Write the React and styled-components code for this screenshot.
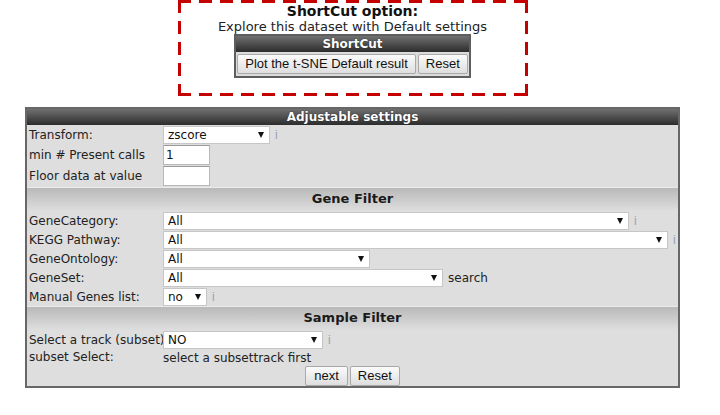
import React from 'react';
import styled, { createGlobalStyle } from 'styled-components';

const Global = createGlobalStyle`
  html, body { margin: 0; padding: 0; background: #fff; }
  body { font-family: "DejaVu Sans", Verdana, sans-serif; color: #222; }
  * { box-sizing: border-box; }
`;

const Page = styled.div`
  width: 705px;
  display: flex;
  flex-direction: column;
  align-items: center;
`;

const dash = (dir) =>
  `repeating-linear-gradient(${dir}, #c40000 0 13px, transparent 13px 21px)`;

const ShortcutBox = styled.section`
  width: 350px;
  padding: 3px 3px 18px;
  background:
    ${dash('90deg')} left top / 100% 3px no-repeat,
    ${dash('90deg')} left bottom / 100% 3px no-repeat,
    ${dash('180deg')} left top / 3px 100% no-repeat,
    ${dash('180deg')} right top / 3px 100% no-repeat;
  display: flex;
  flex-direction: column;
  align-items: center;
`;

const BoxTitle = styled.div`
  font-weight: bold;
  font-size: 14px;
  line-height: 16px;
  color: #111;
`;

const BoxText = styled.div`
  font-size: 13px;
  line-height: 15px;
  color: #222;
`;

const MiniTable = styled.div`
  border: 2px solid #5e5e5e;
  background: #dcdcdc;
`;

const DarkHeader = styled.div`
  height: 16px;
  line-height: 16px;
  text-align: center;
  color: #fff;
  font-weight: bold;
  font-size: 12px;
  background: linear-gradient(#707070, #2c2c2c);
  text-shadow: 0 0 1px #000;
`;

const ButtonRow = styled.div`
  display: flex;
  justify-content: center;
  gap: 2px;
  padding: ${(p) => p.$pad || '0'};
`;

const Btn = styled.button`
  font-family: "Liberation Sans", Arial, sans-serif;
  font-size: 13px;
  color: #111;
  height: 20px;
  padding: 0 ${(p) => p.$px || 7}px;
  border: 1px solid #a9a9a9;
  border-radius: 2px;
  background: linear-gradient(#fbfbfb, #dedede);
  line-height: 18px;
`;

const Settings = styled.div`
  margin-top: 11px;
  width: 655px;
  border: 2px solid #676767;
  background: #dedede;
`;

const SectionHeader = styled.div`
  height: 24px;
  line-height: 21px;
  text-align: center;
  font-weight: bold;
  font-size: 13px;
  color: #1a1a1a;
  border-top: 1px solid #ebebeb;
  background: linear-gradient(#b9b9b9, #dedede);
`;

const Row = styled.div`
  display: grid;
  grid-template-columns: 136px 1fr;
  align-items: center;
  padding: ${(p) => p.$pad || '1px 0 0'};
`;

const Label = styled.div`
  padding-left: 2px;
  font-size: 12px;
  white-space: nowrap;
  color: #222;
`;

const Control = styled.div`
  display: flex;
  align-items: center;
  gap: 5px;
  font-size: 12px;
  line-height: 16px;
  color: #222;
`;

const SelectBox = styled.div`
  width: ${(p) => p.$w}px;
  height: 18px;
  background: #fff;
  border: 1px solid #c6c6c6;
  display: flex;
  align-items: center;
  justify-content: space-between;
  padding: 0 5px 0 4px;
  font-size: 12px;
  color: #111;
`;

const Arrow = styled.span`
  width: 0;
  height: 0;
  border-left: 3.5px solid transparent;
  border-right: 3.5px solid transparent;
  border-top: 6px solid #111;
`;

const Info = styled.span`
  font-family: "Liberation Sans", Arial, sans-serif;
  font-size: 12px;
  color: #98a1af;
`;

const TextInput = styled.input`
  width: 47px;
  height: 20px;
  border: 1px solid #b8b8b8;
  border-top-color: #9a9a9a;
  background: #fff;
  padding: 0 2px;
  font-family: "DejaVu Sans", Verdana, sans-serif;
  font-size: 12px;
  color: #111;
`;

const TextRow = styled(Row)`
  height: 17px;
  padding: 0;
  line-height: 17px;
`;

function Select({ width, value, info }) {
  return (
    <Control>
      <SelectBox $w={width}>
        <span>{value}</span>
        <Arrow />
      </SelectBox>
      {info && <Info>i</Info>}
    </Control>
  );
}

export default function App() {
  return (
    <>
      <Global />
      <Page>
        <ShortcutBox>
          <BoxTitle>ShortCut option:</BoxTitle>
          <BoxText>Explore this dataset with Default settings</BoxText>
          <MiniTable>
            <DarkHeader>ShortCut</DarkHeader>
            <ButtonRow $pad="2px 1px">
              <Btn>Plot the t-SNE Default result</Btn>
              <Btn>Reset</Btn>
            </ButtonRow>
          </MiniTable>
        </ShortcutBox>

        <Settings>
          <DarkHeader>Adjustable settings</DarkHeader>
          <Row $pad="1px 0">
            <Label>Transform:</Label>
            <Select width={107} value="zscore" info />
          </Row>
          <Row $pad="0 0 1px">
            <Label>min # Present calls</Label>
            <Control>
              <TextInput defaultValue="1" />
            </Control>
          </Row>
          <Row $pad="0 0 1px">
            <Label>Floor data at value</Label>
            <Control>
              <TextInput defaultValue="" />
            </Control>
          </Row>

          <SectionHeader>Gene Filter</SectionHeader>
          <Row>
            <Label>GeneCategory:</Label>
            <Select width={466} value="All" info />
          </Row>
          <Row>
            <Label>KEGG Pathway:</Label>
            <Select width={505} value="All" info />
          </Row>
          <Row>
            <Label>GeneOntology:</Label>
            <Select width={207} value="All" />
          </Row>
          <Row>
            <Label>GeneSet:</Label>
            <Control>
              <SelectBox $w={280}>
                <span>All</span>
                <Arrow />
              </SelectBox>
              <span>search</span>
            </Control>
          </Row>
          <Row>
            <Label>Manual Genes list:</Label>
            <Select width={44} value="no" info />
          </Row>

          <SectionHeader>Sample Filter</SectionHeader>
          <Row>
            <Label>Select a track (subset)</Label>
            <Select width={160} value="NO" info />
          </Row>
          <TextRow>
            <Label>subset Select:</Label>
            <Control>select a subsettrack first</Control>
          </TextRow>
          <ButtonRow>
            <Btn $px={8}>next</Btn>
            <Btn>Reset</Btn>
          </ButtonRow>
        </Settings>
      </Page>
    </>
  );
}
